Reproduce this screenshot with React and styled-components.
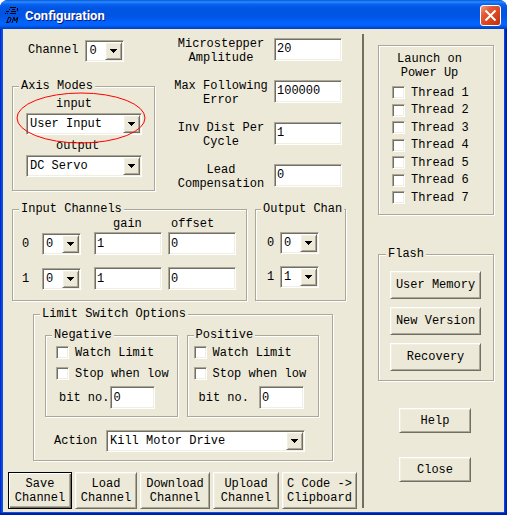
import React, { useId } from "react";
import styled, { createGlobalStyle, css } from "styled-components";

const face = "#ece9d8";
const shade = "#aca899";
const dark = "#716f64";
const light = "#f1efe2";

const GlobalStyle = createGlobalStyle`
  * { box-sizing: border-box; }
  body {
    margin: 0;
    background: #fff;
    color: #000;
    font: 12px/14px "Liberation Mono", "Courier New", monospace;
  }
  button, input, select { font: inherit; color: inherit; margin: 0; border-radius: 0; }
`;

const sunken = css`
  border: 1px solid;
  border-color: ${shade} #fff #fff ${shade};
  box-shadow: inset 1px 1px 0 ${dark}, inset -1px -1px 0 ${light};
  background: #fff;
`;

const raised = css`
  border: 1px solid;
  border-color: #fff ${dark} ${dark} #fff;
  box-shadow: inset 1px 1px 0 ${light}, inset -1px -1px 0 ${shade};
  background: ${face};
`;

const Window = styled.main`
  padding: 0 3px 3px;
  border-radius: 8px 8px 0 0;
  background: linear-gradient(90deg, #0019cf, #0855dd 2px, #0855dd calc(100% - 3px), #0030d8 calc(100% - 2px), #00138c);
  box-shadow: inset 0 -2px 0 #001ea0;
`;

const TitleBar = styled.header`
  display: flex;
  align-items: center;
  gap: 6px;
  height: 29px;
  margin: 0 -3px;
  padding: 0 6px 0 5px;
  border-radius: 8px 8px 0 0;
  background: linear-gradient(#0a58d8 0, #2a8bff 2px, #0a64f0 4px, #0055e5 8px, #0054e3 16px, #0262fb 22px, #0264ff 25px, #0048d0 28px, #003dc0 29px);
`;

const Title = styled.h1`
  flex: 1;
  margin: 2px 0 0;
  color: #fff;
  font: bold 13px/20px Roboto, sans-serif;
  text-shadow: 1px 1px 0 #0a1883;
`;

const CloseBox = styled.button`
  display: grid;
  place-items: center;
  width: 21px;
  height: 21px;
  margin-top: 2px;
  padding: 0;
  border: 1px solid #fff;
  border-radius: 3px;
  background: linear-gradient(135deg, #f0a088 0, #e25a38 30%, #d8421c 65%, #b83010 100%);
`;

const Client = styled.div`
  display: grid;
  grid-template-columns: minmax(0, 359fr) 2px minmax(0, 140fr);
  background: ${face};
`;

const Divider = styled.div`
  margin: 5px 0 4px;
  background: ${dark};
`;

const Settings = styled.form`
  display: flex;
  flex-direction: column;
  padding: 8px 5px 3px;
`;

const TopArea = styled.div`
  display: grid;
  grid-template-columns: 143fr 179fr;
  gap: 8px;
  padding: 0 15px 0 4px;
`;

const AxisColumn = styled.div`
  display: flex;
  flex-direction: column;
  gap: 17px;
  padding-top: 3px;
`;

const ChannelRow = styled.div`
  display: flex;
  align-items: center;
  gap: 7px;
  padding-left: 16px;
  & > label { margin-top: -2px; }
`;

const Group = styled.fieldset`
  min-width: 0;
  margin: 0;
  padding: ${(p) => p.$pad};
  border: 1px solid ${shade};
  box-shadow: inset 1px 1px 0 #fff, 1px 1px 0 #fff;
`;

const Legend = styled.legend`
  margin-left: ${(p) => p.$inset || 0}px;
  padding: 0 2px;
  background: ${face};
  white-space: nowrap;
`;

const ModeStack = styled.div`
  position: relative;
  display: flex;
  flex-direction: column;
  gap: 2px;
`;

const ModeLabel = styled.label`
  padding-left: 30px;
  &:not(:first-child) { margin-top: 2px; }
`;

const Highlight = styled.svg`
  position: absolute;
  left: -10px;
  top: -5px;
  width: 130px;
  height: 52px;
  overflow: visible;
  pointer-events: none;
`;

const ParamList = styled.div`
  display: flex;
  flex-direction: column;
  gap: 14px;
`;

const ParamRow = styled.div`
  display: grid;
  grid-template-columns: 1fr 68px;
  align-items: center;
  gap: 4px;
  padding-left: 9px;
  & > label { text-align: center; white-space: pre-line; }
  & > input { margin-top: -4px; }
`;

const Field = styled.input`
  ${sunken}
  display: block;
  width: 100%;
  min-width: 0;
  height: 23px;
  padding: 0 2px;
  outline: none;
`;

const SelectBox = styled.div`
  ${sunken}
  position: relative;
  width: ${(p) => p.$width || "100%"};
  height: 22px;
  & > select {
    display: block;
    width: 100%;
    height: 20px;
    padding: 0 18px 0 3px;
    border: 0;
    appearance: none;
    background: transparent;
    outline: none;
  }
`;

const ArrowButton = styled.span`
  ${raised}
  position: absolute;
  top: 1px;
  right: 1px;
  display: grid;
  place-items: center;
  width: 17px;
  height: 18px;
  pointer-events: none;
`;

const ChannelGroups = styled.div`
  display: grid;
  grid-template-columns: 235fr 91fr;
  gap: 8px;
  margin-top: 11px;
  padding: 0 11px 0 4px;
`;

const ColumnHead = styled.span`
  padding-left: ${(p) => p.$indent}px;
`;

const ChannelTable = styled.div`
  display: grid;
  grid-template-columns: ${(p) => p.$columns};
  align-items: center;
  row-gap: 12px;
  margin-top: ${(p) => p.$top || 0}px;
`;

const FieldPair = styled.div`
  display: grid;
  grid-template-columns: 1fr 1fr;
  gap: 6px;
  padding-left: ${(p) => p.$indent || 0}px;
`;

const LimitGroup = styled(Group)`
  margin: 6px 24px 0 25px;
`;

const SwitchPair = styled.div`
  display: grid;
  grid-template-columns: 1fr 1fr;
  gap: 9px;
`;

const SwitchStack = styled.div`
  display: flex;
  flex-direction: column;
  gap: 8px;
`;

const CheckLabel = styled.label`
  display: flex;
  align-items: center;
  gap: 6px;
  height: 13px;
  white-space: nowrap;
`;

const CheckBox = styled.input`
  ${sunken}
  appearance: none;
  flex: none;
  width: 13px;
  height: 13px;
  &:checked { background: ${dark}; }
`;

const BitRow = styled.div`
  display: flex;
  align-items: center;
  gap: ${(p) => p.$gap}px;
  margin-top: -2px;
  padding-left: ${(p) => p.$indent}px;
  white-space: nowrap;
  & > input { width: 45px; }
`;

const ActionRow = styled.div`
  display: grid;
  grid-template-columns: 52px minmax(0, 1fr);
  align-items: center;
  margin-top: 13px;
  padding: 0 14px 0 9px;
`;

const ButtonBar = styled.div`
  display: grid;
  grid-template-columns: 64fr 62fr 70fr 66fr 75fr;
  gap: 3px;
  margin-top: 11px;
`;

const Button = styled.button`
  ${raised}
  min-width: 0;
  height: ${(p) => p.$height}px;
  padding: 0;
  white-space: pre-line;
  ${(p) =>
    p.$default &&
    css`
      border-color: #000;
      box-shadow: inset 1px 1px 0 #fff, inset -1px -1px 0 ${dark}, inset -2px -2px 0 ${shade};
    `}
`;

const SidePanel = styled.aside`
  display: flex;
  flex-direction: column;
  padding: 16px 10px 0 14px;
`;

const LaunchBox = styled.section`
  padding: 6px 12px 10px 13px;
  border: 1px solid ${shade};
  box-shadow: inset 1px 1px 0 #fff, 1px 1px 0 #fff;
`;

const LaunchTitle = styled.h2`
  margin: 0 14px 6px 0;
  font: inherit;
  text-align: center;
  white-space: pre-line;
`;

const ThreadList = styled.div`
  display: flex;
  flex-direction: column;
  justify-content: space-between;
  height: 118px;
`;

const FlashGroup = styled(Group)`
  margin-top: 32px;
`;

const FlashStack = styled.div`
  display: grid;
  gap: 8px;
`;

const SideButtons = styled.div`
  display: grid;
  gap: 24px;
  margin-top: 27px;
  padding: 0 23px 0 21px;
`;

function Combo({ id, value, width }) {
  return (
    <SelectBox $width={width}>
      <select id={id} defaultValue={value}>
        <option>{value}</option>
      </select>
      <ArrowButton aria-hidden="true">
        <svg width="7" height="4" viewBox="0 0 7 4" shapeRendering="crispEdges">
          <path d="M0 0h7v1H6v1H5v1H4v1H3V3H2V2H1V1H0z" />
        </svg>
      </ArrowButton>
    </SelectBox>
  );
}

function Param({ label, value }) {
  const id = useId();
  return (
    <ParamRow>
      <label htmlFor={id}>{label}</label>
      <Field id={id} defaultValue={value} />
    </ParamRow>
  );
}

function Check({ label }) {
  return (
    <CheckLabel>
      <CheckBox type="checkbox" />
      {label}
    </CheckLabel>
  );
}

function LimitSwitch({ title, pad, legendInset, indent, gap }) {
  const id = useId();
  return (
    <Group $pad={pad}>
      <Legend $inset={legendInset}>{title}</Legend>
      <SwitchStack>
        <Check label="Watch Limit" />
        <Check label="Stop when low" />
        <BitRow $indent={indent} $gap={gap}>
          <label htmlFor={id}>bit no.</label>
          <Field id={id} defaultValue="0" />
        </BitRow>
      </SwitchStack>
    </Group>
  );
}

function AppIcon() {
  return (
    <svg width="14" height="18" viewBox="0 0 14 18" fill="none" stroke="#000" aria-hidden="true">
      <path d="M5 1.5h6M4 3.5h1M7 3.5h3M12.5 2v3M1 5.5h3M6 5.5h5M2 7.5h1M5 7.5h6M0 7.5h1" />
      <path d="M3 11.500h2q1.500 0 .8 2.500t-2.800 2.500h-2M3.500 11.500l-1.500 5M7 17l2-6 .8 4 3-4-1.300 6" />
    </svg>
  );
}

const THREADS = [1, 2, 3, 4, 5, 6, 7];
const CHANNEL_ACTIONS = ["Save\nChannel", "Load\nChannel", "Download\nChannel", "Upload\nChannel", "C Code ->\nClipboard"];

export default function App() {
  return (
    <>
      <GlobalStyle />
      <Window>
        <TitleBar>
          <AppIcon />
          <Title>Configuration</Title>
          <CloseBox type="button" aria-label="Close window">
            <svg width="13" height="13" viewBox="0 0 13 13" stroke="#fff" strokeWidth="2">
              <path d="M1.500 1.500l10 10M11.500 1.500l-10 10" />
            </svg>
          </CloseBox>
        </TitleBar>
        <Client>
          <Settings onSubmit={(e) => e.preventDefault()}>
            <TopArea>
              <AxisColumn>
                <ChannelRow>
                  <label htmlFor="channel">Channel</label>
                  <Combo id="channel" value="0" width="39px" />
                </ChannelRow>
                <Group $pad="4px 12px 13px 13px">
                  <Legend $inset={-7}>Axis Modes</Legend>
                  <ModeStack>
                    <ModeLabel htmlFor="mode-in">input</ModeLabel>
                    <Combo id="mode-in" value="User Input" />
                    <ModeLabel htmlFor="mode-out">output</ModeLabel>
                    <Combo id="mode-out" value="DC Servo" />
                    <Highlight viewBox="0 0 130 52" preserveAspectRatio="none" aria-hidden="true">
                      <ellipse cx="65" cy="26" rx="64" ry="25" fill="none" stroke="#f00" />
                    </Highlight>
                  </ModeStack>
                </Group>
              </AxisColumn>
              <ParamList>
                <Param label={"Microstepper\nAmplitude"} value="20" />
                <Param label={"Max Following\nError"} value="100000" />
                <Param label={"Inv Dist Per\nCycle"} value="1" />
                <Param label={"Lead\nCompensation"} value="0" />
              </ParamList>
            </TopArea>

            <ChannelGroups>
              <Group $pad="1px 10px 10px 9px">
                <Legend $inset={-3}>Input Channels</Legend>
                <FieldPair $indent={72}>
                  <ColumnHead $indent={19}>gain</ColumnHead>
                  <ColumnHead $indent={3}>offset</ColumnHead>
                </FieldPair>
                <ChannelTable $columns="20px 39px minmax(0, 1fr)" $top={1}>
                  {[0, 1].map((n) => (
                    <React.Fragment key={n}>
                      <label htmlFor={`in-${n}`}>{n}</label>
                      <Combo id={`in-${n}`} value="0" />
                      <FieldPair $indent={13}>
                        <Field aria-label={`gain ${n}`} defaultValue="1" />
                        <Field aria-label={`offset ${n}`} defaultValue="0" />
                      </FieldPair>
                    </React.Fragment>
                  ))}
                </ChannelTable>
              </Group>
              <Group $pad="16px 0 11px 11px">
                <Legend $inset={-6}>Output Chan</Legend>
                <ChannelTable $columns="13px 39px">
                  {[0, 1].map((n) => (
                    <React.Fragment key={n}>
                      <label htmlFor={`out-${n}`}>{n}</label>
                      <Combo id={`out-${n}`} value={String(n)} />
                    </React.Fragment>
                  ))}
                </ChannelTable>
              </Group>
            </ChannelGroups>

            <LimitGroup $pad="7px 13px 8px 11px">
              <Legend $inset={-5}>Limit Switch Options</Legend>
              <SwitchPair>
                <LimitSwitch title="Negative" pad="4px 0 7px 10px" legendInset={-4} indent={3} gap={1} />
                <LimitSwitch title="Positive" pad="4px 0 7px 6px" legendInset={0} indent={5} gap={10} />
              </SwitchPair>
              <ActionRow>
                <label htmlFor="action">Action</label>
                <Combo id="action" value="Kill Motor Drive" />
              </ActionRow>
            </LimitGroup>

            <ButtonBar>
              {CHANNEL_ACTIONS.map((label, i) => (
                <Button key={label} type="button" $height={37} $default={i === 0}>
                  {label}
                </Button>
              ))}
            </ButtonBar>
          </Settings>
          <Divider />
          <SidePanel>
            <LaunchBox>
              <LaunchTitle>{"Launch on\nPower Up"}</LaunchTitle>
              <ThreadList>
                {THREADS.map((n) => (
                  <Check key={n} label={`Thread ${n}`} />
                ))}
              </ThreadList>
            </LaunchBox>
            <FlashGroup $pad="10px 12px 9px 11px">
              <Legend $inset={-4}>Flash</Legend>
              <FlashStack>
                <Button type="button" $height={28}>User Memory</Button>
                <Button type="button" $height={28}>New Version</Button>
                <Button type="button" $height={28}>Recovery</Button>
              </FlashStack>
            </FlashGroup>
            <SideButtons>
              <Button type="button" $height={25}>Help</Button>
              <Button type="button" $height={25}>Close</Button>
            </SideButtons>
          </SidePanel>
        </Client>
      </Window>
    </>
  );
}
